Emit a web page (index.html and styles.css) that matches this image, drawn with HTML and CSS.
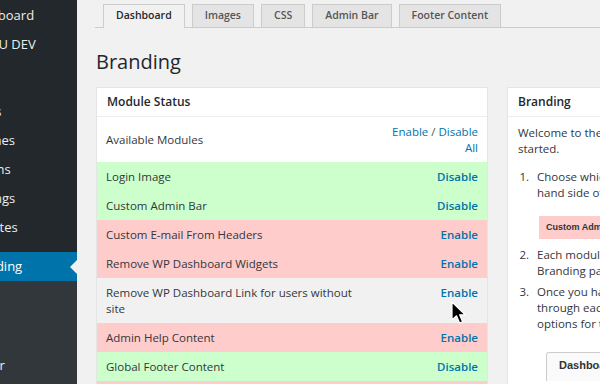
FILE: index.html
```html
<!DOCTYPE html>
<html lang="en">
<head>
	<meta charset="utf-8">
	<title>Branding</title>
	<link rel="stylesheet" href="styles.css">
</head>
<body>
	<div class="admin">
		<aside class="menu">
			<ul>
				<li><a href="#">Dashboard</a></li>
				<li><a href="#">WPMU DEV</a></li>
				<li class="sep"></li>
				<li><a href="#">Sites</a></li>
				<li><a href="#">Users</a></li>
				<li><a href="#">Themes</a></li>
				<li><a href="#">Plugins</a></li>
				<li><a href="#">Settings</a></li>
				<li><a href="#">Updates</a></li>
				<li class="sep"></li>
				<li class="current"><a href="#">Branding</a></li>
			</ul>
			<div class="submenu">
				<a href="#">Admin Bar</a>
			</div>
		</aside>
		<main class="content">
			<nav class="tabs">
				<a class="tab active" href="#">Dashboard</a>
				<a class="tab" href="#">Images</a>
				<a class="tab" href="#">CSS</a>
				<a class="tab" href="#">Admin Bar</a>
				<a class="tab" href="#">Footer Content</a>
			</nav>
			<h1>Branding</h1>
			<div class="columns">
				<section class="box modules">
					<h2>Module Status</h2>
					<div class="row">
						<span class="label">Available Modules</span>
						<span class="action plain"><a href="#">Enable</a> / <a href="#">Disable All</a></span>
					</div>
					<div class="row on">
						<span class="label">Login Image</span>
						<span class="action"><a href="#">Disable</a></span>
					</div>
					<div class="row on">
						<span class="label">Custom Admin Bar</span>
						<span class="action"><a href="#">Disable</a></span>
					</div>
					<div class="row off">
						<span class="label">Custom E-mail From Headers</span>
						<span class="action"><a href="#">Enable</a></span>
					</div>
					<div class="row off">
						<span class="label">Remove WP Dashboard Widgets</span>
						<span class="action"><a href="#">Enable</a></span>
					</div>
					<div class="row hover">
						<span class="label">Remove WP Dashboard Link for users without site</span>
						<span class="action"><a href="#">Enable</a></span>
					</div>
					<div class="row off">
						<span class="label">Admin Help Content</span>
						<span class="action"><a href="#">Enable</a></span>
					</div>
					<div class="row on">
						<span class="label">Global Footer Content</span>
						<span class="action"><a href="#">Disable</a></span>
					</div>
					<div class="row off">
						<span class="label">Custom Login Screen</span>
						<span class="action"><a href="#">Enable</a></span>
					</div>
				</section>
				<section class="box help">
					<h2>Branding</h2>
					<div class="body">
						<p>Welcome to the Branding plugin. Here is how to get<br>started.</p>
						<ol>
							<li>Choose which modules you want on the right<br>hand side of the Module Status box.
								<div class="shot pink">Custom Admin Bar</div>
							</li>
							<li>Each module you activate gets a tab on the<br>Branding page.</li>
							<li>Once you have activated modules, click<br>through each tab to set the<br>options for that module.
								<div class="shot tab-shot">Dashboard</div>
							</li>
						</ol>
					</div>
				</section>
			</div>
		</main>
		<svg class="cursor" width="16" height="26" viewBox="0 0 16 26">
			<path d="M1 1 L1 19 L5.5 14.8 L8.6 22 L11.6 20.7 L8.6 13.8 L14.2 13.8 Z" fill="#000" stroke="#fff" stroke-width="1.2" stroke-linejoin="round"/>
		</svg>
	</div>
</body>
</html>
```

FILE: styles.css
```css
html, body {
	margin: 0;
	height: 100%;
}

body {
	background: #f1f1f1;
	font-family: "Open Sans", "Liberation Sans", sans-serif;
	color: #32373c;
	overflow: hidden;
}

a {
	text-decoration: none;
}

.admin {
	display: flex;
	height: 384px;
	position: relative;
}

/* left admin menu, scrolled partly out of view */
.menu {
	width: 77px;
	flex: none;
	background: #23282d;
	overflow: hidden;
	display: flex;
	flex-direction: column;
}

.menu ul {
	list-style: none;
	margin: 0;
	padding: 1px 0 0;
}

.menu li a {
	display: block;
	height: 29px;
	line-height: 29px;
	margin-left: -33px;
	font-size: 13px;
	color: #eee;
	white-space: nowrap;
}

.menu li.sep {
	height: 9px;
}

.menu li.sep + li.current {
	margin-top: 1px;
}

.menu li.current {
	background: #0073aa;
	position: relative;
}

.menu li.current a {
	color: #fff;
}

.menu li.current::after {
	content: "";
	position: absolute;
	right: 0;
	top: 8px;
	border: 7px solid transparent;
	border-right-color: #f1f1f1;
	border-left-width: 5px;
}

.submenu {
	flex: 1;
	background: #32373c;
	padding-top: 74px;
}

.submenu a {
	display: block;
	line-height: 20px;
	margin-left: -59px;
	font-size: 13px;
	color: #eee;
	white-space: nowrap;
}

/* main area */
.content {
	flex: 1;
	padding: 4px 0 0 19px;
	min-width: 0;
}

.tabs {
	display: flex;
	gap: 7px;
	padding-left: 8px;
	margin-left: -1px;
	border-bottom: 1px solid #ccc;
}

.tab {
	display: block;
	height: 22px;
	line-height: 21px;
	padding: 0 12px;
	margin-bottom: -1px;
	border: 1px solid #ccc;
	border-bottom: none;
	background: #e4e4e4;
	color: #555;
	font-size: 10.5px;
	font-weight: 600;
}

.tab.active {
	background: #f1f1f1;
	color: #23282d;
	height: 23px;
}

h1 {
	font-size: 20px;
	font-weight: 400;
	line-height: 30px;
	margin: 19px 0 10px;
	color: #23282d;
}

.columns {
	display: grid;
	grid-template-columns: 392px 300px;
	gap: 19px;
}

.box {
	background: #fff;
	border: 1px solid #e5e5e5;
	border-bottom: none;
}

.box h2 {
	margin: 0;
	height: 28px;
	line-height: 28px;
	padding: 0 10px;
	font-size: 12px;
	font-weight: 600;
	color: #23282d;
	border-bottom: 1px solid #eee;
}

.row {
	display: grid;
	grid-template-columns: 1fr 90px;
	column-gap: 22px;
	align-items: center;
	padding: 6.5px 9px;
	font-size: 11.5px;
	line-height: 16px;
	background: #fff;
}

.row .label {
	color: #32373c;
}

.row .action {
	align-self: start;
	text-align: right;
	color: #555;
}

.row .action a {
	color: #0073aa;
	font-weight: 600;
}

.row .action.plain a {
	font-weight: 400;
}

.row.on {
	background: #ccffcc;
}

.row.off {
	background: #ffcccc;
}

.row.hover {
	background: #f1f1f1;
}

.help .body {
	padding: 8px 10px 0;
	font-size: 11.5px;
	line-height: 16px;
	white-space: nowrap;
}

.help p {
	margin: 0 0 12px;
}

.help ol {
	margin: 0;
	padding-left: 14px;
}

.help li {
	padding-left: 5px;
}

.help li:nth-child(2) {
	margin-bottom: 5px;
}

.shot {
	font-family: "Liberation Sans", Arial, sans-serif;
	font-weight: 700;
	color: #333;
}

.shot.pink {
	margin: 15px 0 8px 2px;
	height: 23px;
	line-height: 23px;
	padding-left: 7px;
	background: #ffcccc;
	font-size: 9px;
}

.shot.tab-shot {
	width: fit-content;
	margin: 20px 0 0 9px;
	height: 28px;
	line-height: 24px;
	padding: 0 12px;
	border: 1px solid #ccc;
	border-bottom: none;
	border-radius: 3px 3px 0 0;
	background: #fafafa;
	font-size: 11px;
}

.cursor {
	position: absolute;
	left: 451px;
	top: 301px;
}
```
